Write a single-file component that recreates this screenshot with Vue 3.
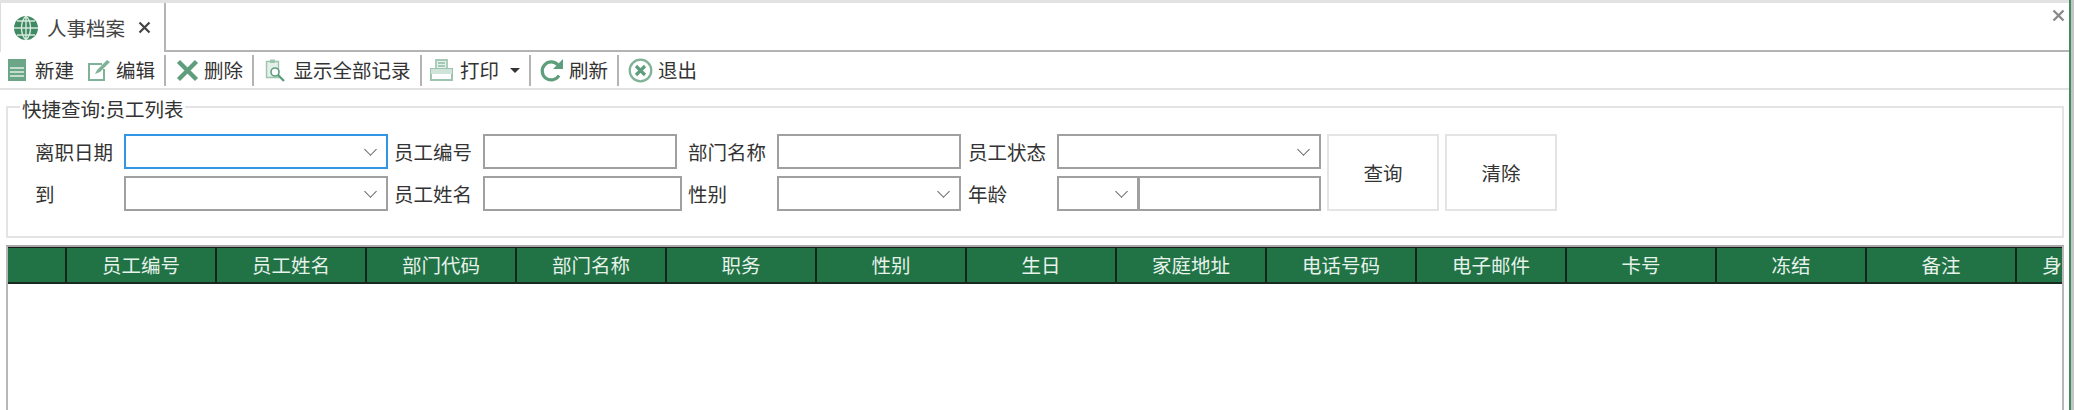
<script setup>
const columns = ['', '员工编号', '员工姓名', '部门代码', '部门名称', '职务', '性别', '生日', '家庭地址', '电话号码', '电子邮件', '卡号', '冻结', '备注', '身份证号码']
</script>

<template>
  <div class="page">
    <div class="tabstrip">
      <div class="tab">
        <svg class="tab-icon" width="26" height="26" viewBox="0 0 26 26">
          <circle cx="13" cy="13" r="12" fill="#3f8a63" />
          <path d="M13 1v24M1 13h24M4 6h18M4 20h18M13 1c-6 6-6 18 0 24M13 1c6 6 6 18 0 24" fill="none" stroke="#d5e8dc" stroke-width="1.4" />
        </svg>
        <span class="tab-title">人事档案</span>
        <svg class="tab-close" width="13" height="13" viewBox="0 0 13 13">
          <path d="M1.5 1.5l10 10M11.5 1.5l-10 10" stroke="#444" stroke-width="2.2" />
        </svg>
      </div>
      <svg class="win-close" width="13" height="13" viewBox="0 0 13 13">
        <path d="M1.5 1.5l10 10M11.5 1.5l-10 10" stroke="#8a8a8a" stroke-width="2.4" />
      </svg>
    </div>

    <div class="toolbar">
      <button class="tool tool-new">
        <svg width="20" height="24" viewBox="0 0 20 24">
          <path d="M1 1h18v22H1z" fill="#6ba686" />
          <path d="M3 10h14M3 14h14M3 18h14" stroke="#e4f0e9" stroke-width="1.4" />
        </svg>
        <span>新建</span>
      </button>
      <button class="tool tool-edit">
        <svg width="24" height="22" viewBox="0 0 24 22">
          <path d="M15 5H2v16h15V10" fill="none" stroke="#7fb297" stroke-width="2" />
          <path d="M8 15l2-4L20 1l3 2-10 10z" fill="#7fb297" />
        </svg>
        <span>编辑</span>
      </button>
      <i class="sep"></i>
      <button class="tool tool-del">
        <svg width="23" height="23" viewBox="0 0 23 23">
          <path d="M2.5 2.5l18 18M20.5 2.5l-18 18" stroke="#5f9e7c" stroke-width="4.4" />
        </svg>
        <span>删除</span>
      </button>
      <i class="sep"></i>
      <button class="tool tool-all">
        <svg width="21" height="25" viewBox="0 0 21 25">
          <path d="M1.5 3.5h12v16h-12z" fill="#e4f0e9" stroke="#9cc4ae" stroke-width="1.4" />
          <path d="M5 1.5h5v3.5H5z" fill="#9cc4ae" />
          <circle cx="10" cy="14" r="4" fill="#fff" stroke="#5f9e7c" stroke-width="1.6" />
          <path d="M13 17l6 6" stroke="#5f9e7c" stroke-width="2.4" />
        </svg>
        <span>显示全部记录</span>
      </button>
      <i class="sep"></i>
      <button class="tool tool-print">
        <svg width="25" height="24" viewBox="0 0 25 24">
          <path d="M7 10V2h11v8M9 5h7M9 8h7" fill="#e4f0e9" stroke="#a5c9b6" stroke-width="1.8" />
          <path d="M2 11h21v11H2z" fill="#fff" stroke="#9cc4ae" stroke-width="2" />
          <path d="M2 11h21v5H2z" fill="#cfe3d8" />
        </svg>
        <span>打印</span>
        <b class="caret"></b>
      </button>
      <i class="sep"></i>
      <button class="tool tool-refresh">
        <svg width="25" height="25" viewBox="0 0 25 25">
          <path d="M20 17.5a9 9 0 1 1-1-10.5" fill="none" stroke="#5f9e7c" stroke-width="3.2" />
          <path d="M24 1v10H14z" fill="#5f9e7c" />
        </svg>
        <span>刷新</span>
      </button>
      <i class="sep"></i>
      <button class="tool tool-exit">
        <svg width="25" height="25" viewBox="0 0 25 25">
          <circle cx="12.5" cy="12.5" r="10.8" fill="none" stroke="#7fb297" stroke-width="2.2" />
          <path d="M8 8l9 9M17 8l-9 9" stroke="#5f9e7c" stroke-width="3.2" />
        </svg>
        <span>退出</span>
      </button>
    </div>

    <fieldset class="query">
      <legend>快捷查询:员工列表</legend>
      <div class="query-row">
        <div class="fields">
          <div class="row">
            <label class="w-a">离职日期</label>
            <div class="combo focus w-combo"><i class="chev"></i></div>
            <label class="w-b">员工编号</label>
            <div class="input w-in1"></div>
            <label class="w-c">部门名称</label>
            <div class="input w-in3"></div>
            <label class="w-d">员工状态</label>
            <div class="combo w-last"><i class="chev"></i></div>
          </div>
          <div class="row">
            <label class="w-a">到</label>
            <div class="combo w-combo"><i class="chev"></i></div>
            <label class="w-b">员工姓名</label>
            <div class="input w-in2"></div>
            <label class="w-c2">性别</label>
            <div class="combo w-in3"><i class="chev"></i></div>
            <label class="w-d">年龄</label>
            <div class="combo w-age"><i class="chev"></i></div>
            <div class="input w-age2"></div>
          </div>
        </div>
        <button class="action">查询</button>
        <button class="action">清除</button>
      </div>
    </fieldset>

    <div class="grid">
      <div class="grid-head">
        <div v-for="(c, i) in columns" :key="i" class="cell">{{ c }}</div>
      </div>
    </div>
    <div class="edge"></div>
  </div>
</template>

<style>
html, body { margin: 0; background: #fff; overflow: hidden; }
</style>

<style scoped>
.page {
  position: relative;
  width: 2074px;
  height: 410px;
  overflow: hidden;
  background: #fff;
  color: #333;
  font-family: "Noto Sans CJK SC", "Liberation Sans", sans-serif;
  font-size: 19.5px;
  box-sizing: border-box;
  display: flex;
  flex-direction: column;
}
.tabstrip {
  height: 47px;
  flex: none;
  display: flex;
  justify-content: space-between;
  border-top: 3px solid #e2e2e2;
  border-bottom: 2px solid #b4b4b4;
  box-sizing: content-box;
}
.tab {
  width: 166px;
  height: 49px;
  box-sizing: border-box;
  border-right: 2px solid #b4b4b4;
  border-left: 1px solid #ddd;
  background: #fff;
  display: flex;
  align-items: center;
  padding: 0 0 0 12px;
}
.tab-title { margin-left: 8px; line-height: 1; color: #444; }
.tab-close { margin-left: 13px; }
.win-close { margin: 6px 9px 0 0; }
.toolbar {
  height: 36px;
  flex: none;
  display: flex;
  align-items: center;
  border-bottom: 2px solid #e2e2e2;
  padding-left: 7px;
}
.tool {
  display: flex;
  align-items: center;
  border: none;
  background: none;
  padding: 0;
  font: inherit;
  color: inherit;
  line-height: 1;
}
.tool svg { flex: none; }
.tool span { display: block; white-space: nowrap; width: 39px; }
.tool-new span { margin-left: 8px; }
.tool-edit { margin-left: 13px; }
.tool-edit span { margin-left: 5px; }
.tool-del { margin-left: 10px; }
.tool-del span { margin-left: 5px; }
.tool-all { margin-left: 11px; }
.tool-all span { margin-left: 7px; width: 118px; }
.tool-print { margin-left: 7px; }
.tool-print span { margin-left: 6px; }
.tool-refresh { margin-left: 8px; }
.tool-refresh span { margin-left: 5px; }
.tool-exit { margin-left: 9px; }
.tool-exit span { margin-left: 5px; }
.sep { width: 2px; height: 31px; background: #b4b4b4; margin-left: 9px; flex: none; }
.caret {
  width: 0;
  height: 0;
  margin-left: 11px;
  border-left: 5px solid transparent;
  border-right: 5px solid transparent;
  border-top: 5px solid #333;
}
.query {
  margin: 2px 10px 0 6px;
  padding: 0;
  height: 146px;
  box-sizing: border-box;
  border: 2px solid #e4e4e4;
  min-width: 0;
  flex: none;
}
.query legend {
  margin-left: 12px;
  padding: 4px 2px 0;
  line-height: 26px;
  font-size: 19.5px;
  color: #333;
}
.query-row {
  display: flex;
  gap: 6px;
  padding: 12px 0 0 27px;
}
.fields { display: flex; flex-direction: column; gap: 7px; }
.row { display: flex; align-items: center; height: 35px; }
.row label { flex: none; line-height: 1; }
.w-a { width: 89px; }
.w-b { width: 89px; margin-left: 6px; }
.w-c { width: 89px; margin-left: 11px; }
.w-c2 { width: 89px; margin-left: 6px; }
.w-d { width: 89px; margin-left: 7px; }
.w-combo { width: 264px; }
.w-in1 { width: 194px; }
.w-in2 { width: 199px; }
.w-in3 { width: 184px; }
.w-last { width: 264px; }
.w-age { width: 82px; }
.w-age2 { width: 182px; border-left-width: 1px !important; }
.input, .combo {
  height: 35px;
  box-sizing: border-box;
  border: 2px solid #a0a0a0;
  background: #fff;
  flex: none;
}
.combo { position: relative; }
.combo.focus { border-color: #2f96e8; }
.chev {
  position: absolute;
  right: 11px;
  top: 9px;
  width: 8px;
  height: 8px;
  border-right: 1.5px solid #666;
  border-bottom: 1.5px solid #666;
  transform: rotate(45deg);
}
.action {
  width: 112px;
  height: 77px;
  flex: none;
  box-sizing: border-box;
  border: 2px solid #e4e4e4;
  background: #fff;
  font: inherit;
  color: #333;
  padding: 0;
}
.grid {
  margin: 7px 10px 0 6px;
  flex: 1;
  border-top: 2px solid #a8a8a8;
  border-left: 2px solid #b8b8b8;
  border-right: 2px solid #b8b8b8;
  min-height: 0;
}
.grid-head {
  display: flex;
  height: 37px;
  background: #217346;
  border-top: 1px solid #1a1a1a;
  border-bottom: 2px solid #1a2a20;
  box-sizing: border-box;
  overflow: hidden;
}
.cell {
  flex: 0 0 150px;
  width: 150px;
  box-sizing: border-box;
  border-right: 2px solid #14261c;
  color: #e6f2ea;
  text-align: center;
  line-height: 34px;
  white-space: nowrap;
}
.cell:first-child { flex-basis: 59px; width: 59px; }
.edge {
  position: absolute;
  top: 0;
  right: 0;
  bottom: 0;
  width: 5px;
  background: #c4c4c4;
  border-left: 2px solid #3f8a63;
  box-sizing: border-box;
}
</style>
